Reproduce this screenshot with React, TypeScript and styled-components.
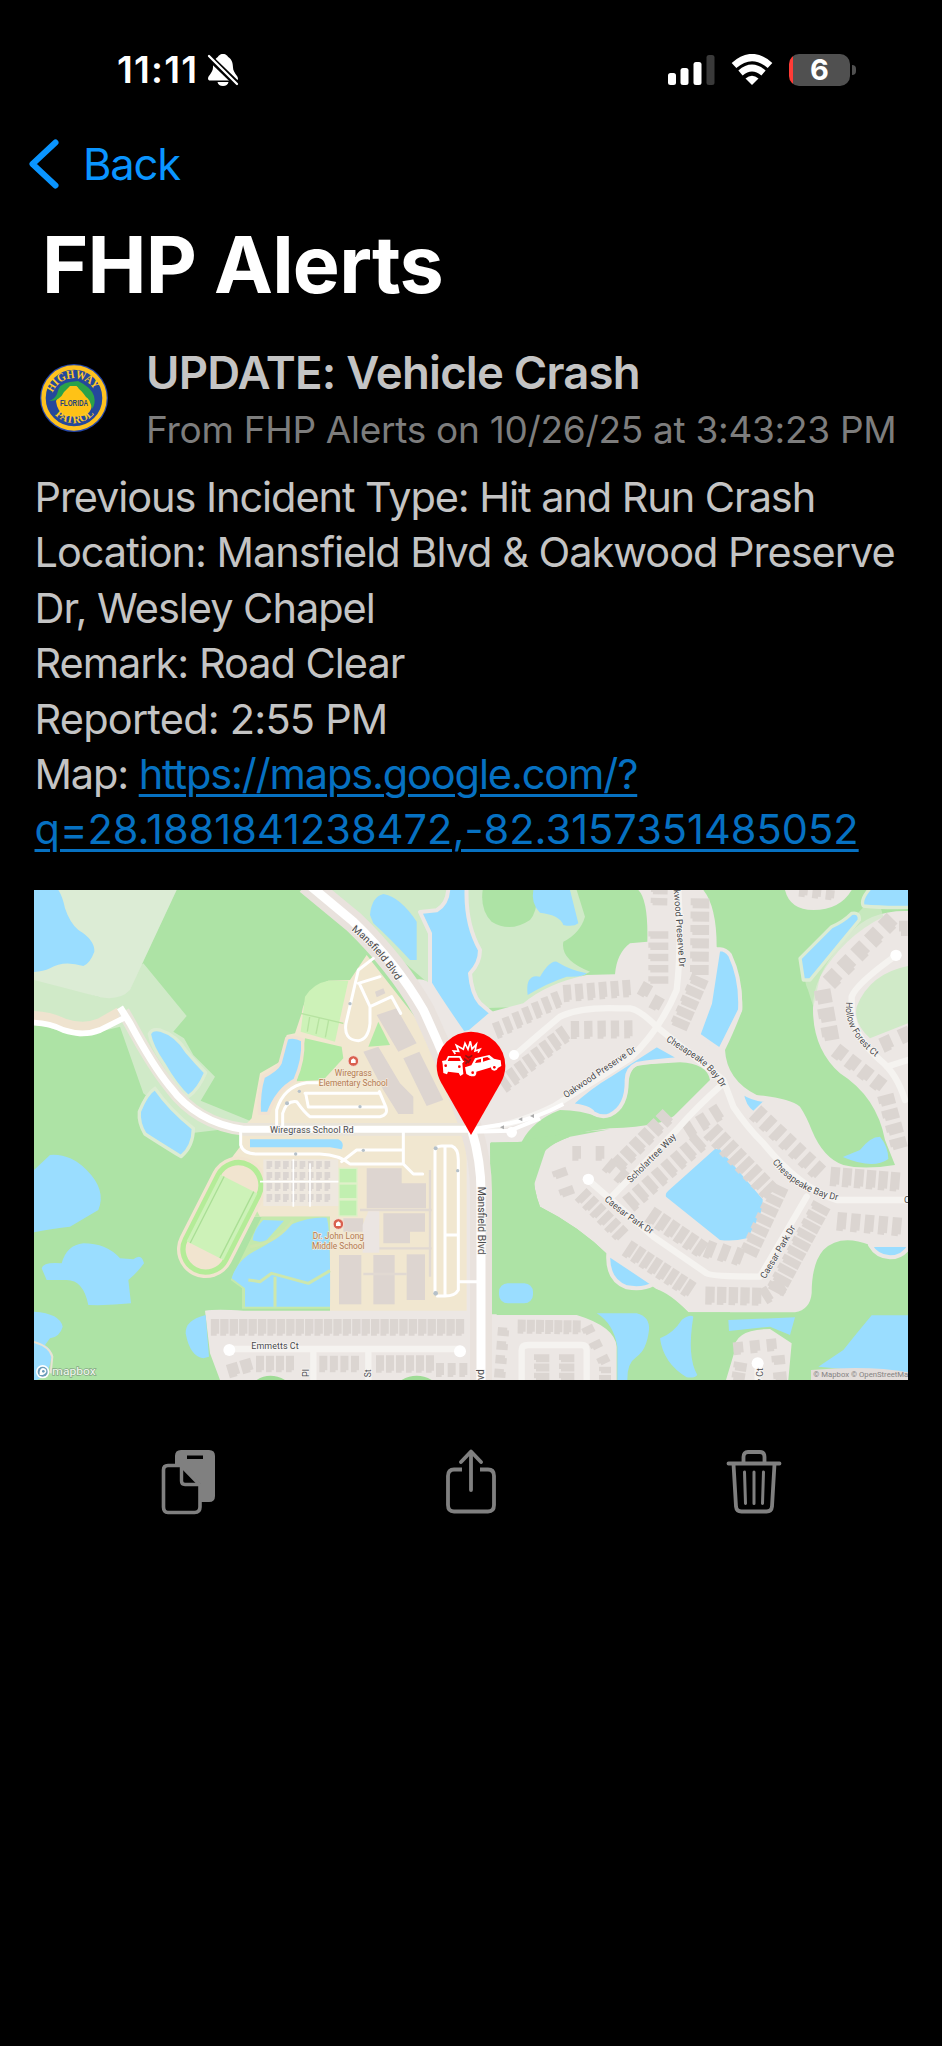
import React from "react";
import styled, { createGlobalStyle } from "styled-components";

const GlobalStyle = createGlobalStyle`
  html, body { margin: 0; padding: 0; background: #000; }
  * { box-sizing: border-box; }
`;

const Screen = styled.main`
  width: 942px;
  height: 2046px;
  overflow: hidden;
  display: flex;
  flex-direction: column;
  background: #000;
  color: #c4c4c4;
  font-family: Inter, "Liberation Sans", sans-serif;
`;

const StatusBar = styled.header`
  display: flex;
  justify-content: space-between;
  align-items: center;
  height: 50px;
  margin-top: 45px;
  padding: 0 86px 0 117px;
`;

const StatusGroup = styled.div<{ $gap: number }>`
  display: flex;
  align-items: center;
  gap: ${(p) => p.$gap}px;
`;

const Clock = styled.span`
  color: #fff;
  font-size: 37.5px;
  font-weight: 600;
  line-height: 50px;
  letter-spacing: 1.2px;
`;

const NavBar = styled.nav`
  display: flex;
  align-items: center;
  height: 60px;
  margin-top: 39px;
  padding-left: 28px;
  gap: 23px;
`;

const BackLabel = styled.span`
  color: #0a95ff;
  font-size: 43.5px;
  line-height: 60px;
  letter-spacing: -1.2px;
`;

const PageTitle = styled.h1`
  margin: 20px 0 0 42px;
  color: #fff;
  font-size: 79px;
  font-weight: 700;
  line-height: 100px;
  letter-spacing: -0.8px;
  white-space: nowrap;
`;

const AlertHeader = styled.section`
  display: flex;
  align-items: flex-start;
  height: 116px;
  margin-top: 29px;
  padding-left: 38.5px;
  gap: 37.5px;
`;

const SealFrame = styled.span`
  display: flex;
  padding-top: 20px;
`;

const AlertHeading = styled.div`
  display: flex;
  flex-direction: column;
  padding-top: 1px;
`;

const AlertTitle = styled.h2<{ $track: number }>`
  margin: 0;
  font-size: 45.5px;
  font-weight: 600;
  line-height: 58px;
  letter-spacing: ${(p) => p.$track}px;
  white-space: nowrap;
`;

const AlertMeta = styled.p<{ $track: number }>`
  margin: 0;
  color: #7d7d7d;
  font-size: 37px;
  line-height: 56px;
  letter-spacing: ${(p) => p.$track}px;
  white-space: nowrap;
`;

const Message = styled.section`
  margin-top: 11px;
  padding-left: 34.5px;
`;

const Line = styled.p<{ $track?: number }>`
  margin: 0;
  font-size: 41.5px;
  line-height: 55.4px;
  letter-spacing: ${(p) => p.$track ?? -1.03}px;
  white-space: nowrap;
`;

const MapLink = styled.a`
  color: #0671c2;
  text-decoration: underline;
  text-decoration-thickness: 3px;
  text-underline-offset: 5px;
`;

const MapCard = styled.figure`
  width: 874px;
  height: 490px;
  margin: 32px 0 0 34px;
  overflow: hidden;
  svg { display: block; }
`;

const ActionBar = styled.footer`
  display: flex;
  justify-content: space-between;
  align-items: center;
  margin-top: 69px;
  padding: 0 160px 0 160px;
`;

type Pt = [number, number];

/* A row of house footprints, evenly spaced between two points. */
function Row({ a, b, n, w = 24, h = 46, turn = 0 }: { a: Pt; b: Pt; n: number; w?: number; h?: number; turn?: number }) {
  const angle = (Math.atan2(b[1] - a[1], b[0] - a[0]) * 180) / Math.PI + turn;
  return (
    <g fill="#dbd5d1">
      {Array.from({ length: n }, (_, i) => {
        const t = n === 1 ? 0 : i / (n - 1);
        const x = a[0] + (b[0] - a[0]) * t;
        const y = a[1] + (b[1] - a[1]) * t;
        return <path key={i} d={`M${-w / 2} ${-h / 2}H${w / 2}V${h / 2 - 6}H${w / 5}V${h / 2}H${-w / 2}Z`} transform={`translate(${x} ${y}) rotate(${angle})`} />;
      })}
    </g>
  );
}

const halo = { stroke: "#fff", strokeWidth: 5, strokeLinejoin: "round" as const, paintOrder: "stroke" as const };

function StreetName({ id, d, len, children, size = 28 }: { id: string; d: string; len: number; children: string; size?: number }) {
  return (
    <>
      <path id={id} d={d} fill="none" />
      <text fontSize={size} fill="#4a4a4c" {...halo} stroke="#f7f5f3">
        <textPath href={`#${id}`} textLength={len} lengthAdjust="spacingAndGlyphs">{children}</textPath>
      </text>
    </>
  );
}

function School({ x, y, lines }: { x: number; y: number; lines: string[] }) {
  return (
    <g>
      <circle cx={x} cy={y} r="16" fill="#d9604f" stroke="#f6dfd5" strokeWidth="3" />
      <path d={`M${x - 7} ${y + 6}V${y - 3}L${x} ${y - 8}L${x + 7} ${y - 3}V${y + 6}Z`} fill="#fff" />
      {lines.map((l, i) => (
        <text key={l} x={x} y={y + 45 + i * 31} textAnchor="middle" fontSize="25" fill="#b27a50" {...halo} stroke="#f6ead9" strokeWidth="4">{l}</text>
      ))}
    </g>
  );
}

const WATER = "#9addff";
const HOME = "#ece7e4";
const LIGHT = "#d0eac8";

function IncidentMap() {
  return (
    <svg width="874" height="490" viewBox="12 30 2622 1470" fontFamily="Roboto, sans-serif">
      <rect x="0" y="0" width="2700" height="1540" fill="#ade3a5" />

      <path d="M12 290 L210 352 L340 250 L470 408 L430 455 L462 475 L490 525 L555 590 L512 662 L690 735 L480 760 L340 640 L270 440 L150 470 L12 430Z" fill={LIGHT} />
      <path d="M12 30H440L300 330Q270 362 210 352Q110 325 12 300Z" fill="#dcecd5" />
      <path d="M890 30H1310Q1300 100 1360 180Q1310 280 1380 390L1300 450L1195 310Q1150 270 890 50Z" fill={LIGHT} />
      <path d="M1310 30H1640L1665 110Q1650 160 1600 185Q1590 240 1680 275L1480 380L1350 385Z" fill={LIGHT} />
      <path d="M1358 30H1520Q1525 90 1500 120Q1440 160 1385 125Q1350 90 1358 30Z" fill="#ade3a5" />

      {/* school grounds */}
      <path d="M1010 225L960 300L895 302Q825 330 815 400L795 460L770 465L750 545L690 580L665 715L632 750L630 800L600 840L640 1010H900V1295H1345V750L1290 620L1170 430Z" fill="#f1e7d0" />
      <path d="M895 302H955L915 485L812 455L825 350Q850 310 895 302Z" fill="#cdf2b8" />
      <path d="M812 400L940 430M840 405L832 455M868 412L858 462M896 420L886 472" stroke="#b6e3a0" strokeWidth="4" fill="none" />
      <path d="M825 475L935 500L940 535L880 600L800 604Z" fill="#b3eaa5" />
      <path d="M1045 425L1080 495L1015 500Z" fill="#b3eaa5" />

      {/* neighbourhoods */}
      <path d="M1150 300Q1190 290 1205 320L1300 460L1385 395L1480 370Q1550 310 1670 285L1755 283Q1760 220 1800 190L1852 185Q1855 60 1825 30H2020Q2060 80 2060 200Q2140 260 2137 390Q2110 460 2085 510Q2090 600 2180 645Q2280 655 2310 680Q2330 710 2345 750Q2380 835 2440 855Q2500 870 2595 855L2565 780Q2540 650 2430 580Q2340 500 2350 360Q2360 270 2460 160Q2520 90 2634 93V1095H2520Q2430 1060 2380 1110Q2345 1150 2345 1240Q2340 1290 2295 1297H1975Q1920 1240 1880 1228L1740 1130Q1650 1040 1530 980Q1510 930 1510 870Q1530 800 1620 770L1480 785L1380 790L1385 1305H1640Q1755 1340 1760 1400V1500H1310V750Z" fill={HOME} />
      <path d="M525 1292Q560 1286 640 1292H1400V1500H570L540 1420Z" fill={HOME} />
      <path d="M2265 30Q2280 90 2350 90Q2430 90 2465 30Z" fill={HOME} />
      <path d="M2088 1500L2112 1420Q2105 1347 2220 1347L2285 1390L2275 1500Z" fill={HOME} />
      <path d="M1475 785Q1510 720 1590 690Q1650 690 1710 712Q1790 700 1795 610Q1800 560 1830 554L1950 547Q2030 550 2040 600L1940 700Q1910 740 1740 745Q1600 760 1550 800L1382 1305V790Z" fill="#ade3a5" />
      <path d="M1382 787H1475Q1510 770 1740 748L1620 770Q1510 810 1510 870Q1510 930 1530 980Q1650 1040 1740 1130Q1725 1200 1760 1220Q1850 1240 1880 1228Q1940 1260 1975 1297H2100V1320H1700L1640 1303H1385Z" fill="#ade3a5" />
      <path d="M2634 258Q2520 280 2480 380Q2470 430 2520 475L2634 430Z" fill={LIGHT} />
      <path d="M2334 330Q2310 280 2350 240L2540 40L2560 110Q2440 170 2370 290L2350 380Z" fill={LIGHT} opacity=".7" />
      <path d="M680 1500Q720 1475 765 1500ZM1115 1500Q1160 1475 1205 1500Z" fill="#9fdc96" />

      {/* ponds */}
      <g fill={WATER} stroke="#dcecd3" strokeWidth="10" strokeLinejoin="round">
        <path d="M358 462Q365 445 390 450Q440 465 470 515Q500 550 527 578Q505 630 475 650Q440 620 400 550Q365 500 358 462Z" />
        <path d="M375 625Q420 690 490 745Q490 800 453 830Q380 785 345 762Q325 730 328 695Q350 640 375 625Z" />
        <path d="M2310 235L2405 140Q2440 125 2465 100Q2490 95 2488 120L2340 300H2320Z" />
        <path d="M2520 25H2640V82Q2560 84 2500 78Q2490 60 2520 25Z" />
      </g>
      <g fill={WATER} stroke="#f1e2d2" strokeWidth="10" strokeLinejoin="round">
        <path d="M770 475Q790 465 818 480Q822 540 795 600Q740 630 715 700H688Q685 640 700 590Q740 570 750 550Z" />
      </g>
      <g fill={WATER} stroke={HOME} strokeWidth="12" strokeLinejoin="round">
        <path d="M1170 96L1220 91Q1255 70 1255 20H1310Q1305 130 1350 210Q1350 250 1320 280Q1325 340 1350 370L1385 400L1320 455L1300 460Q1230 360 1200 310V160Z" />
        <path d="M2065 208Q2085 205 2100 225Q2135 300 2130 390Q2110 430 2070 510Q2040 490 2005 465L2040 370Z" />
        <path d="M1620 675Q1680 620 1740 585L1880 495L1955 537Q1870 543 1820 552Q1790 565 1790 600Q1792 680 1740 705Q1715 715 1690 700Q1680 680 1620 675Z" />
        <path d="M2135 635Q2170 660 2212 660L2170 700Q2140 680 2135 635Z" />
        <path d="M1735 1122L1870 1212Q1840 1230 1790 1222Q1730 1200 1735 1122Z" />
        <path d="M2520 1095H2640Q2620 1132 2580 1132Q2540 1130 2520 1095Z" />
      </g>
      <g fill={WATER}>
        <path d="M12 30H85Q98 50 105 85Q120 130 145 150Q195 180 193 215Q180 250 160 258Q100 240 60 265Q40 275 12 276Z" />
        <path d="M1020 105Q1025 50 1060 42Q1110 50 1160 125V240H1140Q1080 175 1030 130Z" />
        <path d="M1510 30H1620L1645 130Q1630 142 1600 135Q1590 105 1530 98Q1502 70 1510 30Z" />
        <path d="M1493 345Q1485 280 1530 290Q1560 240 1580 245Q1620 270 1670 280Q1660 292 1610 290Q1550 310 1493 345Z" />
        <path d="M2055 807L2070 808L2198 958V985Q2170 1050 2150 1075Q2110 1085 2070 1080L1908 950Q1905 940 1915 932Z" />
        <path d="M2440 830L2490 810Q2520 770 2550 770Q2575 800 2575 837Q2530 870 2440 832Z" />
        <path d="M1700 1300H1820Q1860 1310 1857 1350Q1850 1410 1820 1430Q1790 1450 1792 1500H1762V1400Q1750 1330 1700 1300Z" />
        <path d="M1990 1310Q1980 1302 1955 1320Q1930 1360 1890 1375Q1900 1450 1970 1492Q1995 1495 2002 1485Q1970 1430 1990 1310Z" />
        <path d="M2095 1320L2295 1312L2280 1365L2220 1340L2097 1353Z" />
        <path d="M2634 1306H2525Q2480 1360 2440 1410L2365 1460L2634 1485Z" />
        <rect x="1407" y="1210" width="102" height="60" rx="26" />
        <path d="M12 870L60 825Q120 820 170 870Q230 930 205 990L120 1040Q70 1045 12 1057Z" />
        <path d="M35 1165Q40 1145 95 1150Q110 1095 160 1090Q230 1090 270 1135L310 1138Q335 1118 342 1150Q320 1180 295 1200L303 1270Q240 1277 175 1275Q160 1200 110 1200L50 1200Z" />
        <path d="M12 1295Q90 1300 98 1340Q90 1370 60 1375L45 1395Q60 1405 65 1420Q60 1490 20 1500H12Z" />
        <path d="M527 1305Q465 1320 467 1360Q480 1430 520 1435L537 1430Z" />
      </g>
      <path d="M12 1386Q60 1400 67 1430L62 1480" fill="none" stroke="#e8e3d5" strokeWidth="6" />
      <path d="M600 840L640 1010H695L602 1200L636 1225V1286H900V1010H690Z" fill="#c4e9ad" />
      <g fill={WATER}>
        <path d="M605 1195Q620 1140 680 1110Q740 1080 780 1035Q840 1010 890 1013Q902 1040 900 1280H645V1225Z" />
        <path d="M700 1020Q670 1050 668 1080Q690 1090 710 1080L762 1022Z" />
      </g>
      <path d="M655 1200L690 1205L725 1180L780 1195L835 1210L900 1172M735 1190V1280M790 1020Q740 1090 660 1100" fill="none" stroke="#cde7ad" strokeWidth="9" strokeLinejoin="round" />
      <path d="M660 778H925Q945 788 935 808L900 802H660Z" fill={WATER} />

      {/* running track */}
      <g transform="translate(576 1012) rotate(27)">
        <rect x="-86" y="-194" width="172" height="388" rx="86" fill="#f1e4cf" />
        <rect x="-68" y="-176" width="136" height="352" rx="68" fill="#f1e4cf" stroke="#b4ec98" strokeWidth="16" />
        <rect x="-62" y="-112" width="124" height="224" fill="#cdf2b8" />
        <path d="M-50 -112V112M50 -112V112" stroke="#aadf95" strokeWidth="4" />
      </g>

      {/* school buildings */}
      <g fill="#ddd5d0">
        <path d="M1040 405L1100 385L1160 490L1105 515ZM1000 515L1045 500L1110 610L1150 650V702H1105L1085 670L1060 630ZM1120 535L1168 515L1240 660L1190 678ZM1035 335L1060 325L1066 340L1040 352Z" />
        <path d="M1010 865H1115V910H1188V985H1010ZM1060 1000H1185V1055H1140V1090H1060ZM940 1015H1000V1055H940Z" />
        <rect x="927" y="1125" width="67" height="148" />
        <rect x="1030" y="1125" width="64" height="148" />
        <rect x="1130" y="1123" width="55" height="137" />
        <rect x="893" y="895" width="26" height="54" />
      </g>
      <path d="M990 1105H1205M990 990H1205M1200 870V1190M1000 1182H1130" stroke="#e1d9d2" strokeWidth="7" fill="none" />
      <path d="M998 1035L1015 994H1048V1118H998Z" fill="#ebe5e2" />
      <g fill="#c1efb0" stroke="#dff0c8" strokeWidth="4">
        <rect x="927" y="865" width="54" height="44" /><rect x="927" y="912" width="54" height="44" /><rect x="927" y="960" width="54" height="48" />
      </g>
      <rect x="700" y="838" width="225" height="140" fill="#eee8df" />
      {[855, 888, 921, 954].map((y) => <Row key={y} a={[718, y]} b={[892, y]} n={8} w={17} h={24} />)}
      <path d="M690 905H925M790 838V980M840 850V980" stroke="#fff" strokeWidth="5" />

      {/* houses */}
      <Row a={[555, 1342]} b={[1290, 1342]} n={27} w={25} h={50} />
      <Row a={[690, 1452]} b={[780, 1452]} n={4} h={50} /><Row a={[880, 1452]} b={[975, 1452]} n={4} h={50} />
      <Row a={[1050, 1452]} b={[1200, 1452]} n={6} h={52} /><Row a={[1230, 1470]} b={[1300, 1470]} n={3} h={42} />
      <Row a={[610, 1470]} b={[650, 1458]} n={2} h={42} w={34} />
      <Row a={[1475, 1340]} b={[1640, 1342]} n={7} h={42} /><Row a={[1410, 1480]} b={[1420, 1355]} n={4} h={34} w={26} />
      <Row a={[1535, 1435]} b={[1535, 1490]} n={3} w={24} h={46} /><Row a={[1610, 1435]} b={[1610, 1490]} n={3} w={24} h={46} />
      <Row a={[1675, 1350]} b={[1720, 1440]} n={3} h={36} /><Row a={[1725, 1470]} b={[1725, 1495]} n={2} h={36} w={20} />
      <Row a={[1405, 450]} b={[1580, 360]} n={7} w={22} h={50} turn={6} /><Row a={[1612, 340]} b={[1790, 326]} n={6} w={24} h={52} />
      <Row a={[1425, 610]} b={[1600, 465]} n={8} w={24} h={52} turn={5} /><Row a={[1635, 450]} b={[1795, 448]} n={5} w={25} h={54} />
      <Row a={[1885, 165]} b={[1885, 300]} n={5} w={23} h={60} /><Row a={[1888, 32]} b={[1887, 65]} n={2} w={22} h={50} />
      <Row a={[2010, 70]} b={[2008, 270]} n={6} w={30} h={56} /><Row a={[2005, 305]} b={[1950, 430]} n={5} w={28} h={55} />
      <Row a={[1845, 330]} b={[1880, 370]} n={2} w={32} h={44} turn={-20} />
      <Row a={[2380, 350]} b={[2400, 460]} n={3} w={42} h={50} /><Row a={[2410, 295]} b={[2575, 130]} n={5} w={38} h={52} />
      <Row a={[2430, 520]} b={[2545, 610]} n={4} w={34} h={46} /><Row a={[2570, 660]} b={[2605, 790]} n={4} w={32} h={50} />
      <Row a={[2570, 490]} b={[2625, 465]} n={2} w={34} h={46} /><Row a={[2620, 145]} b={[2620, 150]} n={1} w={46} h={26} />
      <Row a={[1770, 850]} b={[1905, 715]} n={6} w={30} h={50} /><Row a={[1805, 965]} b={[2005, 790]} n={8} w={27} h={56} />
      <Row a={[1980, 750]} b={[2060, 700]} n={3} w={28} h={50} /><Row a={[2050, 760]} b={[2215, 930]} n={8} w={25} h={60} />
      <Row a={[2185, 705]} b={[2360, 870]} n={7} w={27} h={54} /><Row a={[2415, 890]} b={[2595, 905]} n={6} w={28} h={58} />
      <Row a={[2435, 1025]} b={[2600, 1040]} n={5} w={28} h={56} /><Row a={[2245, 930]} b={[2160, 1110]} n={7} w={27} h={54} />
      <Row a={[2370, 985]} b={[2240, 1225]} n={10} w={25} h={58} /><Row a={[1870, 1010]} b={[2010, 1105]} n={6} w={27} h={54} />
      <Row a={[2040, 1110]} b={[2125, 1130]} n={3} w={26} h={54} turn={8} /><Row a={[1800, 1110]} b={[1975, 1225]} n={8} w={24} h={54} />
      <Row a={[2040, 1247]} b={[2180, 1250]} n={5} w={28} h={54} /><Row a={[2210, 1245]} b={[2250, 1220]} n={2} w={26} h={50} />
      <Row a={[1640, 820]} b={[1710, 820]} n={2} w={26} h={44} /><Row a={[1590, 880]} b={[1610, 935]} n={2} w={26} h={44} />
      <Row a={[1660, 950]} b={[1770, 1060]} n={6} w={23} h={50} /><Row a={[1740, 860]} b={[1775, 890]} n={2} w={26} h={46} />
      <Row a={[2125, 1405]} b={[2225, 1395]} n={3} w={30} h={38} /><Row a={[2245, 1440]} b={[2250, 1490]} n={2} w={28} h={40} /><Row a={[2130, 1460]} b={[2125, 1490]} n={2} w={26} h={40} />
      <Row a={[2320, 36]} b={[2400, 45]} n={3} w={26} h={30} />

      {/* local streets */}
      <g fill="none" stroke="#f5f3f0" strokeWidth="19" strokeLinecap="round" strokeLinejoin="round">
        <path d="M600 1407H1290M850 1407V1500M1015 1407V1500" />
        <path d="M1475 1500V1410Q1475 1395 1495 1395H1655Q1670 1395 1670 1410V1500" />
        <path d="M1450 530Q1530 460 1590 410Q1650 380 1770 385H1800Q1830 390 1880 440L2080 600L2110 680Q2150 740 2200 790Q2310 925 2420 960H2634" />
        <path d="M1323 752Q1450 740 1570 680L1800 535Q1890 450 1940 330Q1955 200 1945 30" />
        <path d="M2080 610Q2000 680 1940 750L1745 950M1675 900L1870 1070L2030 1180Q2040 1190 2190 1190L2330 950" />
        <path d="M2600 225Q2480 310 2465 350V400Q2480 480 2550 540Q2600 580 2625 660M2570 560L2634 540" />
        <path d="M2183 1455V1500" />
      </g>
      <g fill="#fff"><circle cx="1675" cy="898" r="17" /><circle cx="2598" cy="226" r="17" /><circle cx="1290" cy="1414" r="18" /><circle cx="598" cy="1410" r="18" /><circle cx="2183" cy="1450" r="18" /><circle cx="1452" cy="525" r="15" /><circle cx="1445" cy="757" r="16" /></g>

      {/* main roads */}
      <g fill="none" strokeLinejoin="round">
        <path d="M12 412Q60 414 100 434Q160 454 210 434L270 400" stroke="#efe3cf" strokeWidth="38" />
        <path d="M830 10L970 125Q1100 250 1180 390Q1260 560 1325 750Q1355 850 1353 950V1500" stroke="#e9e2dd" strokeWidth="66" />
        <path d="M280 395L300 430Q370 560 420 620Q500 730 640 748H1310" stroke="#e9e4da" strokeWidth="38" />
        <path d="M12 428Q60 430 100 450Q160 470 210 450L290 410" stroke="#fff" strokeWidth="17" />
        <path d="M270 382L300 430Q370 560 420 620Q500 728 640 748H1325" stroke="#fff" strokeWidth="21" />
        <path d="M820 0L970 125Q1100 250 1180 390Q1260 560 1325 750Q1355 850 1353 950V1500" stroke="#fff" strokeWidth="27" />
        <path d="M1325 748L1440 730Q1520 715 1600 672M1325 755L1440 752L1530 715" stroke="#fff" strokeWidth="12" />
      </g>
      <g fill="none" stroke="#fff" strokeWidth="9" strokeLinejoin="round" strokeLinecap="round">
        <path d="M632 750V795Q640 822 680 822H870Q930 825 960 852H1120L1150 882H1178M935 845L980 810H1118M1120 750V852" />
        <path d="M1030 235L985 270L948 430Q940 480 985 482Q1015 478 1020 430V380L1085 350L1112 400M985 310L1050 290M990 315L1020 380" />
        <path d="M740 748V690Q760 620 830 608H880M758 748V700Q770 660 800 665Q825 700 840 710H1050Q1075 705 1068 682L1048 635M825 640H1045M828 645L835 681H1065" />
        <path d="M1215 1240V815Q1215 798 1235 798H1265Q1285 805 1285 840V1230Q1275 1248 1245 1248H1222M1245 800V1248M1245 1065H1285M1285 1205H1350" />
      </g>
      <g fill="#b5c0c8"><circle cx="1217" cy="805" r="6" /><circle cx="1217" cy="1240" r="7" /><circle cx="1283" cy="872" r="5" /><circle cx="1000" cy="811" r="5" /><circle cx="960" cy="371" r="5" /><circle cx="990" cy="680" r="5" /><circle cx="771" cy="670" r="6" /><circle cx="808" cy="634" r="5" /><circle cx="797" cy="822" r="5" /></g>
      <path d="M1410 742L1422 736V748ZM1465 718L1477 712V724ZM1500 708L1512 702V714Z" fill="#aaa" />

      <StreetName id="mb1" d="M964 150Q1045 212 1110 320" len={204} size={30}>Mansfield Blvd</StreetName>
      <StreetName id="wsr" d="M720 759H1000" len={251} size={27}>Wiregrass School Rd</StreetName>
      <StreetName id="mb2" d="M1344 920V1200" len={204} size={30}>Mansfield Blvd</StreetName>
      <StreetName id="mb3" d="M1363 1526V1400" len={58} size={30}>Blvd</StreetName>
      <StreetName id="opd1" d="M1608 655Q1720 580 1820 512" len={255}>Oakwood Preserve Dr</StreetName>
      <StreetName id="opd2" d="M1929 14Q1940 130 1950 300" len={248}>akwood Preserve Dr</StreetName>
      <StreetName id="cbd1" d="M1907 482L1990 535Q2045 570 2085 640" len={222}>Chesapeake Bay Dr</StreetName>
      <StreetName id="cbd2" d="M2227 847Q2300 945 2450 966" len={232}>Chesapeake Bay Dr</StreetName>
      <StreetName id="hfc" d="M2448 366Q2440 460 2545 538" len={196}>Hollow Forest Ct</StreetName>
      <StreetName id="sw" d="M1802 910L1960 752" len={195}>Scholartree Way</StreetName>
      <StreetName id="cpd1" d="M1722 960Q1800 1030 1890 1078" len={175}>Caesar Park Dr</StreetName>
      <StreetName id="cpd2" d="M2206 1198L2308 1025" len={180}>Caesar Park Dr</StreetName>
      <StreetName id="em" d="M664 1408H820" len={142} size={26}>Emmetts Ct</StreetName>
      <StreetName id="pl" d="M838 1491V1400" len={24} size={26}>Pl</StreetName>
      <StreetName id="st" d="M1023 1492V1400" len={24} size={26}>St</StreetName>
      <StreetName id="ct" d="M2198 1510V1400" len={46} size={26}>y Ct</StreetName>
      <StreetName id="c" d="M2622 970H2660" len={18} size={26}>C</StreetName>

      <School x={970} y={543} lines={["Wiregrass", "Elementary School"]} />
      <School x={925} y={1032} lines={["Dr. John Long", "Middle School"]} />

      {/* incident pin */}
      <path d="M1323 765L1234 609Q1220 584 1220 558A103 103 0 0 1 1426 558Q1426 584 1412 609Z" fill="#fd0000" />
      <g fill="#fff">
        <path d="M1236 543L1248 541L1254 528H1291L1299 542L1303 544L1297 550L1300 582L1291 588L1286 579L1254 575L1251 583L1240 579L1238 552Z" />
        <path d="M1305 562L1324 556L1335 535L1378 525L1392 536L1412 541L1414 558L1398 567L1389 560L1339 575L1332 586L1320 588L1309 582Z" />
        <circle cx="1328" cy="578" r="11" /><circle cx="1393" cy="562" r="10" />
      </g>
      <path d="M1257 533H1288L1292 543H1253ZM1335 549L1340 540L1353 536V547ZM1359 545V534L1372 531L1382 538Z" fill="#fd0000" />
      <g fill="#fd0000"><circle cx="1247" cy="557" r="4" /><circle cx="1288" cy="560" r="4" /><circle cx="1328" cy="578" r="4" /><circle cx="1393" cy="562" r="4" /></g>
      <path d="M1276 522L1270 513L1286 514L1279 496L1300 508L1305 490L1314 508L1321 484L1326 507L1339 493L1335 513L1350 508L1344 518" fill="none" stroke="#fff" strokeWidth="5" strokeLinejoin="miter" />
      <path d="M1302 536L1312 543L1307 552M1322 537L1314 549M1306 526L1316 533L1327 526" fill="none" stroke="#8c1512" strokeWidth="5" />

      {/* attribution */}
      <circle cx="38" cy="1475" r="20" fill="#fff" /><circle cx="38" cy="1475" r="15" fill="#6b9dba" />
      <path d="M29 1485Q27 1465 39 1464Q50 1466 49 1476Q43 1487 29 1485Z" fill="#fff" /><circle cx="40" cy="1474" r="4" fill="#6b9dba" />
      <text x="67" y="1484" fontSize="32" fill="#f4faf2" stroke="#86a886" strokeWidth="4" paintOrder="stroke" textLength="130" lengthAdjust="spacingAndGlyphs">mapbox</text>
      <path d="M2343 1470Q2520 1455 2634 1477V1500H2343Z" fill="#e3ddda" />
      <text x="2350" y="1492" fontSize="23" fill="#858383" textLength="298" lengthAdjust="spacingAndGlyphs">© Mapbox © OpenStreetMap</text>
    </svg>
  );
}

const BellOff = () => (
  <svg width="32" height="34" viewBox="0 0 32 34">
    <path d="M16 1C12.5 1 11.8 3 10.8 4C7 6.5 6.2 10 6 14.500C5.800 20 1 22.500 1 25.500C1 27 2 27.500 3 27.500H29C30 27.500 31 27 31 25.500C31 22.500 26.200 20 26 14.500C25.800 10 25 6.500 21.200 4C20.200 3 19.500 1 16 1ZM10.500 29H21.500C21 31.500 19 33 16 33S11 31.500 10.500 29Z" fill="#fff" />
    <path d="M1 3L30 31" stroke="#000" strokeWidth="6.500" />
    <path d="M2 3L30 31" stroke="#fff" strokeWidth="2.300" strokeLinecap="round" />
  </svg>
);

const SignalBox = styled.span`
  display: flex;
  width: 47px;
`;

const Signal = () => (
  <svg width="47" height="32" viewBox="0 0 47 32" fill="#fff">
    <rect x="0" y="19" width="8" height="12" rx="2.500" />
    <rect x="12.500" y="14" width="8" height="17" rx="2.500" />
    <rect x="25.500" y="8" width="8" height="23" rx="2.500" />
    <rect x="38.500" y="1" width="8" height="30" rx="2.500" fill="#3a3a3a" />
  </svg>
);

const Wifi = () => (
  <svg width="42" height="32" viewBox="0 0 42 32" fill="none" stroke="#fff">
    <path d="M3 11.500Q21 -4.500 39 11.500" strokeWidth="7" />
    <path d="M9.500 19Q21 9 32.500 19" strokeWidth="6.500" />
    <path d="M21 31L14.500 24.500Q21 19 27.500 24.500Z" fill="#fff" stroke="none" />
  </svg>
);

const BatteryRow = styled.span`
  display: flex;
  align-items: center;
  gap: 2px;
`;

const BatteryBody = styled.span`
  display: flex;
  align-items: center;
  justify-content: center;
  width: 61px;
  height: 32px;
  border-radius: 10px;
  background: linear-gradient(90deg, #ff3b36 0 4px, #505050 4px);
  color: #fff;
  font-size: 29px;
  font-weight: 700;
  line-height: 32px;
`;

const BatteryTip = styled.span`
  width: 4px;
  height: 10px;
  border-radius: 0 4px 4px 0;
  background: #505050;
`;

const Seal = () => (
  <svg width="70" height="70" viewBox="0 0 70 70" fontFamily="Liberation Serif, serif" fontWeight="700">
    <circle cx="35" cy="35" r="34" fill="#2446ab" />
    <circle cx="35" cy="35" r="30.500" fill="#24489c" stroke="#ffc21f" strokeWidth="4.400" />
    <path d="M17 38L24 25L30 22L35 22L42 25L50 34L53 42Q52 51 44 53H27Q18 49 17 38Z" fill="#ffc216" />
    <path d="M10 38Q16 36 18 31Q20 20 31 19L39 18Q52 24 55 33Q57 41 53 46Q51 36 47 34Q42 27 40 26L38 23L31 23L25 29Q21 38 10 38Z" fill="#2ba249" />
    <path id="sealTop" d="M13.500 30A23 23 0 0 1 56.500 30" fill="none" />
    <path id="sealBottom" d="M14 49.500A26 26 0 0 0 56 49.500" fill="none" />
    <text fontSize="12" fill="#ffc928"><textPath href="#sealTop" startOffset="0" textLength="52" lengthAdjust="spacingAndGlyphs">HIGHWAY</textPath></text>
    <text fontSize="11" fill="#ffc928"><textPath href="#sealBottom" startOffset="3" textLength="44" lengthAdjust="spacingAndGlyphs">PATROL</textPath></text>
    <text x="21" y="43" fontFamily="Liberation Sans, sans-serif" fontSize="9.500" fill="#25437c" textLength="28" lengthAdjust="spacingAndGlyphs">FLORIDA</text>
  </svg>
);

const PasteIcon = () => (
  <svg width="56" height="66" viewBox="0 0 56 66">
    <path d="M21 1H49Q55 1 55 7V47Q55 53 49 53H41V35L20 15H15V7Q15 1 21 1Z" fill="#808080" />
    <rect x="27" y="6.500" width="16" height="3.500" fill="#000" />
    <path d="M8 16.500H21L40 36V58Q40 63.500 34.500 63.500H8Q3.500 63.500 3.500 58V21Q3.500 16.500 8 16.500Z" fill="#000" stroke="#808080" strokeWidth="3.600" />
    <path d="M21.500 17V32Q21.500 35.500 25 35.500H39" fill="none" stroke="#808080" strokeWidth="3.400" />
  </svg>
);

const ShareIcon = () => (
  <svg width="52" height="66" viewBox="0 0 52 66" fill="none" stroke="#808080" strokeWidth="3.800" strokeLinecap="round">
    <path d="M17 20.500H9Q3 20.500 3 27V56Q3 62.500 9 62.500H43Q49 62.500 49 56V27Q49 20.500 43 20.500H35" strokeLinecap="butt" />
    <path d="M26 3V41M16 13L26 2.500L36 13" strokeLinejoin="round" />
  </svg>
);

const TrashIcon = () => (
  <svg width="56" height="66" viewBox="0 0 56 66" fill="none" stroke="#808080" strokeWidth="3.800" strokeLinecap="round" strokeLinejoin="round">
    <path d="M2.500 14.500H53.500M17.500 14V8Q17.500 3 22 3H34Q38.500 3 38.500 8V14M7.500 15L10 57.500Q10.500 62.500 15.500 62.500H40.500Q45.500 62.500 46 57.500L48.500 15" />
    <path d="M18.500 23L19.500 54.500M28 23V54.500M37.500 23L36.500 54.500" strokeWidth="3" />
  </svg>
);

export default function App() {
  return (
    <Screen>
      <GlobalStyle />
      <StatusBar>
        <StatusGroup $gap={9}>
          <Clock>11:11</Clock>
          <BellOff />
        </StatusGroup>
        <StatusGroup $gap={16}>
          <SignalBox><Signal /></SignalBox>
          <Wifi />
          <BatteryRow><BatteryBody>6</BatteryBody><BatteryTip /></BatteryRow>
        </StatusGroup>
      </StatusBar>
      <NavBar>
        <svg width="32" height="52" viewBox="0 0 32 52" fill="none" stroke="#0a95ff" strokeWidth="6" strokeLinecap="round" strokeLinejoin="round"><path d="M27.500 4.500L4.500 26L27.500 47.500" /></svg>
        <BackLabel>Back</BackLabel>
      </NavBar>
      <PageTitle>FHP Alerts</PageTitle>
      <AlertHeader>
        <SealFrame><Seal /></SealFrame>
        <AlertHeading>
          <AlertTitle $track={-0.8}>UPDATE: Vehicle Crash</AlertTitle>
          <AlertMeta $track={-0.29}>From FHP Alerts on 10/26/25 at 3:43:23 PM</AlertMeta>
        </AlertHeading>
      </AlertHeader>
      <Message>
        <Line $track={-1.08}>Previous Incident Type: Hit and Run Crash</Line>
        <Line>Location: Mansfield Blvd &amp; Oakwood Preserve</Line>
        <Line>Dr, Wesley Chapel</Line>
        <Line>Remark: Road Clear</Line>
        <Line $track={-0.8}>Reported: 2:55 PM</Line>
        <Line $track={-1.13}>Map: <MapLink>https://maps.google.com/?</MapLink></Line>
        <Line $track={0.04}><MapLink>q=28.1881841238472,-82.3157351485052</MapLink></Line>
      </Message>
      <MapCard><IncidentMap /></MapCard>
      <ActionBar>
        <PasteIcon />
        <ShareIcon />
        <TrashIcon />
      </ActionBar>
    </Screen>
  );
}
